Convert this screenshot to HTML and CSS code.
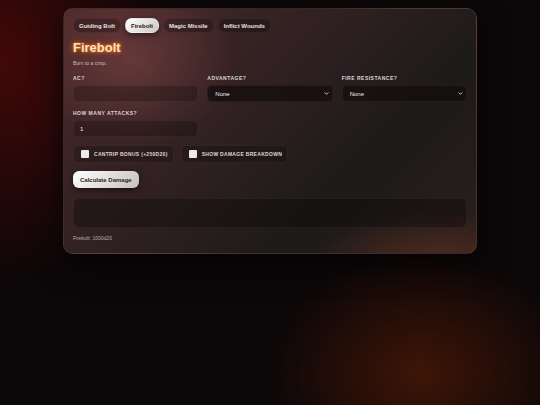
FILE: index.html
```html
<!DOCTYPE html>
<html lang="en">
<head>
<meta charset="utf-8">
<title>Spell Damage Calculator</title>
<link rel="stylesheet" href="styles.css">
</head>
<body>
<main class="card">
  <nav class="tabs">
    <button class="tab">Guiding Bolt</button>
    <button class="tab active">Firebolt</button>
    <button class="tab">Magic Missile</button>
    <button class="tab">Inflict Wounds</button>
  </nav>

  <h1 class="title">Firebolt</h1>
  <p class="subtitle">Burn to a crisp.</p>

  <div class="fields">
    <label class="field">
      <span class="label">AC?</span>
      <span class="input"></span>
    </label>
    <label class="field">
      <span class="label">Advantage?</span>
      <span class="input select">None
        <svg class="chev" viewBox="0 0 8 8" width="5" height="5"><path d="M1.5 2.8 L4 5.3 L6.5 2.8" fill="none" stroke="#ddd" stroke-width="1.4" stroke-linecap="round" stroke-linejoin="round"/></svg>
      </span>
    </label>
    <label class="field">
      <span class="label">Fire Resistance?</span>
      <span class="input select">None
        <svg class="chev" viewBox="0 0 8 8" width="5" height="5"><path d="M1.5 2.8 L4 5.3 L6.5 2.8" fill="none" stroke="#ddd" stroke-width="1.4" stroke-linecap="round" stroke-linejoin="round"/></svg>
      </span>
    </label>
    <label class="field">
      <span class="label">How many attacks?</span>
      <span class="input">1</span>
    </label>
  </div>

  <div class="checks">
    <label class="check"><span class="box"></span>Cantrip bonus (+250d20)</label>
    <label class="check"><span class="box"></span>Show damage breakdown</label>
  </div>

  <button class="calc">Calculate Damage</button>

  <div class="result"></div>

  <p class="formula">Firebolt: 1000d20</p>
</main>
</body>
</html>
```

FILE: styles.css
```css
* { box-sizing: border-box; }

html, body { height: 100%; }

body {
  margin: 0;
  font-family: "Liberation Sans", Arial, sans-serif;
  color: #eee;
  background:
    radial-gradient(ellipse 260px 320px at 0% 15%, rgba(110, 10, 8, 0.55), transparent 70%),
    radial-gradient(ellipse 220px 170px at 78% 92%, rgba(95, 30, 6, 0.6), transparent 70%),
    #0c0708;
  overflow: hidden;
}

.card {
  width: 414px;
  margin: 8px auto 0;
  padding: 9px 9px 12px;
  border-radius: 10px;
  border: 1px solid rgba(255, 255, 255, 0.07);
  background:
    radial-gradient(ellipse 140px 120px at 16% 20%, rgba(150, 80, 80, 0.45), transparent 75%),
    radial-gradient(ellipse 170px 90px at 90% 110%, rgba(140, 60, 30, 0.5), transparent 75%),
    linear-gradient(135deg, #4a2829 0%, #2e2021 45%, #1d1a1a 70%, #2a1f1d 100%);
  box-shadow: 0 10px 30px rgba(0, 0, 0, 0.6);
}

/* spell tabs */
.tabs {
  display: flex;
  gap: 4px;
}

.tab {
  height: 15px;
  padding: 0 5px;
  border: 1px solid rgba(255, 255, 255, 0.05);
  border-radius: 7px;
  background: rgba(0, 0, 0, 0.25);
  color: #e8e2e2;
  font: bold 6px "Liberation Sans", Arial, sans-serif;
}

.tab.active {
  background: linear-gradient(135deg, #ffffff, #cfc7c7);
  color: #222;
  box-shadow: 0 2px 6px rgba(0, 0, 0, 0.5);
}

.title {
  margin: 7px 0 0;
  font-size: 13px;
  line-height: 15px;
  font-weight: bold;
  color: #ffe0bd;
  text-shadow: 0 0 3px #ff7a18, 0 0 6px rgba(255, 110, 20, 0.8);
}

.subtitle {
  margin: 5px 0 0;
  font-size: 5px;
  line-height: 6px;
  color: #c9bdbd;
}

/* form fields */
.fields {
  display: grid;
  grid-template-columns: repeat(3, 1fr);
  column-gap: 9px;
  row-gap: 8px;
  margin-top: 9px;
}

.field {
  display: flex;
  flex-direction: column;
  gap: 4px;
}

.label {
  font-size: 5px;
  line-height: 6px;
  font-weight: bold;
  letter-spacing: 0.5px;
  text-transform: uppercase;
  color: #ddd6d6;
}

.input {
  display: flex;
  align-items: center;
  height: 17px;
  padding: 0 6px;
  border-radius: 5px;
  border: 1px solid rgba(255, 255, 255, 0.05);
  background: rgba(0, 0, 0, 0.22);
  font-size: 6px;
  color: #eee;
}

.select {
  background: rgba(20, 12, 13, 0.75);
  padding-left: 7px;
}

.chev {
  margin-left: auto;
  margin-right: -3px;
}

/* toggles */
.checks {
  display: flex;
  gap: 7px;
  margin-top: 8px;
}

.check {
  display: flex;
  align-items: center;
  gap: 5px;
  height: 18px;
  padding: 0 5px 0 7px;
  border-radius: 5px;
  border: 1px solid rgba(255, 255, 255, 0.05);
  background: rgba(0, 0, 0, 0.2);
  font-size: 5px;
  font-weight: bold;
  letter-spacing: 0.3px;
  text-transform: uppercase;
  color: #ddd6d6;
}

.box {
  width: 8px;
  height: 8px;
  border-radius: 1px;
  background: #efeaea;
}

.calc {
  display: block;
  height: 17px;
  margin-top: 8px;
  padding: 0 7px;
  border: 0;
  border-radius: 6px;
  background: linear-gradient(135deg, #ffffff, #c8bfbf);
  color: #2a2222;
  font: bold 6px "Liberation Sans", Arial, sans-serif;
  box-shadow: 0 2px 6px rgba(0, 0, 0, 0.5);
}

.result {
  height: 30px;
  margin-top: 10px;
  border-radius: 6px;
  border: 1px solid rgba(255, 255, 255, 0.05);
  background: rgba(10, 6, 7, 0.35);
}

.formula {
  margin: 7px 0 0;
  font-size: 5px;
  line-height: 6px;
  color: #b8acac;
}
```
